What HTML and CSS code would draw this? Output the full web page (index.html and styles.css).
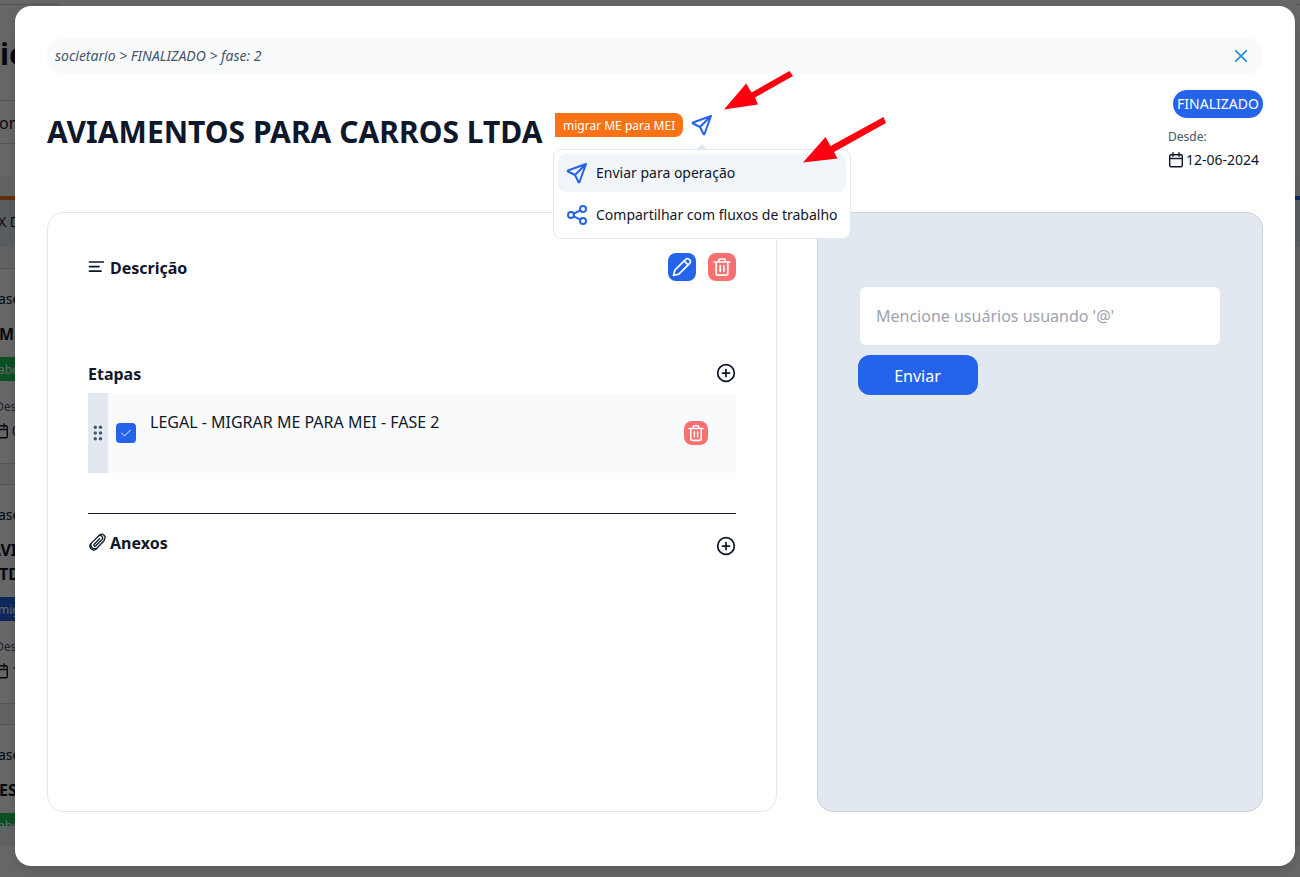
FILE: index.html
```html
<!DOCTYPE html>
<html lang="pt-BR">
<head>
<meta charset="utf-8">
<title>Fluxo de trabalho</title>
<link rel="stylesheet" href="styles.css">
</head>
<body>
<svg class="defs" aria-hidden="true">
  <symbol id="send" viewBox="0 0 24 24"><path d="M10 14 21 3M21 3l-6.500 18a.55.55 0 0 1-1 0L10 14l-7-3.500a.55.55 0 0 1 0-1L21 3"/></symbol>
  <symbol id="share" viewBox="0 0 24 24"><circle cx="6" cy="12" r="3"/><circle cx="18" cy="6" r="3"/><circle cx="18" cy="18" r="3"/><path d="m8.700 10.700 6.600-3.400M8.700 13.300l6.600 3.400"/></symbol>
  <symbol id="calendar" viewBox="0 0 16 16"><rect x="1.700" y="2.700" width="12.600" height="12" rx="1.200"/><path d="M1.700 6.500h12.600M5 .8v3.400M11 .8v3.400"/></symbol>
  <symbol id="trash" viewBox="0 0 20 20"><path d="M2.200 5h15.600M4.200 5v11.700A1.500 1.500 0 0 0 5.700 18.200h8.600a1.500 1.500 0 0 0 1.500-1.500V5M6.800 5V3.500a1.500 1.500 0 0 1 1.500-1.500h3.400a1.500 1.500 0 0 1 1.500 1.500V5M8.200 8.700v5.600M11.800 8.700v5.600"/></symbol>
  <symbol id="plus" viewBox="0 0 20 20"><circle cx="10" cy="10" r="8.300"/><path d="M10 6.500v7M6.500 10h7"/></symbol>
</svg>
<main class="screen">
  <div class="page">
    <div class="edge">
      <div class="topline"></div>
      <div class="brand"><span>ie</span></div>
      <div class="filter"><span>on</span></div>
      <div class="space"></div>
      <div class="board">
        <div class="list-head"><span>X D</span></div>
        <div class="card">
          <span class="phase">ase</span><b class="name">M</b><span class="label green">abe</span><span class="since">Des</span>
          <span class="when"><svg class="cal"><use href="#calendar"/></svg><i>0</i></span>
        </div>
        <div class="card">
          <span class="phase">ase</span><b class="name"><span class="tight">AVI</span><br>TD</b><span class="label blue">mig</span><span class="since">Des</span>
          <span class="when"><svg class="cal"><use href="#calendar"/></svg><i>1</i></span>
        </div>
        <div class="card last"><span class="phase">ase</span><b class="name">ES</b><span class="label green">abe</span></div>
      </div>
    </div>
    <div class="edge right">
      <div class="topline"></div>
      <div class="right-space"></div>
      <div class="board blue-top"><div class="list-head"></div></div>
    </div>
  </div>
  <div class="overlay"></div>
  <section class="modal">
    <nav class="crumbs"><em>societario &gt; FINALIZADO &gt; fase: 2</em>
      <svg class="close" viewBox="0 0 12 12"><path d="m.5.5 11 11m0-11-11 11"/></svg></nav>
    <header class="head">
      <h1>AVIAMENTOS PARA CARROS LTDA</h1>
      <span class="tag">migrar ME para MEI</span>
      <div class="send-wrap">
        <svg class="ico"><use href="#send"/></svg>
        <div class="menu">
          <div class="item active"><svg class="ico"><use href="#send"/></svg><span>Enviar para operação</span></div>
          <div class="item"><svg class="ico"><use href="#share"/></svg><span>Compartilhar com fluxos de trabalho</span></div>
        </div>
      </div>
      <div class="status">
        <span class="pill">FINALIZADO</span>
        <div class="date"><span class="since-label">Desde:</span>
        <span class="day"><svg class="cal"><use href="#calendar"/></svg>12-06-2024</span></div>
      </div>
    </header>
    <div class="cols">
      <section class="details">
        <div class="row desc">
          <h2><svg class="h-ico" viewBox="0 0 16 16"><path d="M1.500 3h14M1.500 7.600H11M1.500 12.200h11.500"/></svg>Descrição</h2>
          <div class="actions">
            <span class="btn edit"><svg viewBox="0 0 20 20"><path d="m1.500 18.500 1.300-5.300L13.700 2.300a2.300 2.300 0 0 1 3.400 0l.6.6a2.300 2.300 0 0 1 0 3.400L6.800 17.200zM12.200 4l3.900 3.900"/></svg></span>
            <span class="btn del"><svg><use href="#trash"/></svg></span>
          </div>
        </div>
        <div class="row steps"><h2>Etapas</h2><svg class="plus"><use href="#plus"/></svg></div>
        <div class="step">
          <div class="grip"><svg viewBox="0 0 10 16"><circle cx="2.300" cy="2.300" r="1.700"/><circle cx="7.500" cy="2.300" r="1.700"/><circle cx="2.300" cy="8" r="1.700"/><circle cx="7.500" cy="8" r="1.700"/><circle cx="2.300" cy="13.800" r="1.700"/><circle cx="7.500" cy="13.800" r="1.700"/></svg></div>
          <span class="check"><svg viewBox="0 0 10 8"><path d="m.5 4 3 3L9.500 1"/></svg></span>
          <span class="step-name">LEGAL - MIGRAR ME PARA MEI - FASE 2</span>
          <span class="btn del small"><svg><use href="#trash"/></svg></span>
        </div>
        <div class="row files"><h2><svg class="clip" viewBox="0 0 18 18"><path d="m11.700 5.700-5.500 5.500a1.100 1.100 0 0 0 1.600 1.600l6.300-6.300a2.500 2.500 0 0 0-3.500-3.500L4.100 9.400a3.700 3.700 0 0 0 5.200 5.300l7-7.200M10.600 3l1-1a3.300 3.300 0 0 1 4.600 4.700M4.100 9.400l-1.500 1.500a3.900 3.900 0 0 0 5.400 5.400l1.500-1.600"/></svg>Anexos</h2><svg class="plus"><use href="#plus"/></svg></div>
      </section>
      <aside class="comments">
        <div class="field">Mencione usuários usuando '@'</div>
        <button class="submit">Enviar</button>
      </aside>
    </div>
  </section>
  <svg class="pointers" viewBox="0 0 164 96"><path d="M1 38.500 23.200 12.500 28.500 21.500 66.500 0 70 5 32 26.500 35 33.500zM80 91.500 102.500 66 107.500 75 160.500 46 163 52 111 81 114.500 87.500z"/></svg>
</main>
</body>
</html>
```
FILE: styles.css
```css
* { box-sizing: border-box; margin: 0; }
body { font-family: "Noto Sans", sans-serif; font-size: 16px; line-height: 24px; color: #0f172a; overflow: hidden; }
svg { display: block; fill: none; stroke: currentColor; stroke-linecap: round; stroke-linejoin: round; flex: none; }
.defs { position: absolute; width: 0; height: 0; }
.screen { position: relative; width: 1300px; height: 877px; overflow: hidden; }

/* board behind the dialog */
.page { display: flex; justify-content: space-between; height: 877px; background: #fff; }
.edge { width: 60px; white-space: nowrap; }
.edge.right { width: 5px; }
.topline { height: 5px; border-bottom: 1px solid #cbd5e1; }
.brand { height: 95px; padding-top: 31px; font-size: 30px; line-height: 36px; font-weight: 700; }
.filter { height: 44px; border: solid #cbd5e1; border-width: 1px 0; padding-top: 11px; line-height: 22px; font-size: 16px; }
.filter span { margin-left: -1px; }
.space { height: 32px; }
.right-space { height: 171px; }
.board { height: 670px; padding-top: 20px; background: #f1f5f9; }
.list-head { height: 51px; margin-bottom: 21px; border-top: 4px solid #f97316; background: #e2e8f0; padding-top: 10px; font-size: 14px; line-height: 24px; }
.list-head span { margin-left: -2px; }
.blue-top .list-head { border-color: #2563eb; }
.card { display: flex; flex-direction: column; align-items: flex-start; margin-bottom: 20px; padding: 20px 0 22px; background: #fff; border: solid #cbd5e1; border-width: 1px 0; }
.card.last { height: 102px; padding-bottom: 0; overflow: hidden; margin: 0; border-bottom: 0; }
.phase { font-size: 14px; line-height: 20px; margin-left: -2px; }
.name { font-size: 16px; margin: 13px 0 11px -1px; }
.tight { margin-left: -9px; }
.label { width: 60px; height: 24px; flex: none; font-size: 12px; line-height: 25px; color: #fff; text-indent: -2px; }
.green { background: #22c55e; }
.blue { background: #2563eb; }
.since { font-size: 12px; line-height: 20px; margin: 16px 0 4px -5px; color: #475569; }
.when { display: flex; align-items: center; height: 20px; margin-left: -7px; gap: 3px; font-size: 14px; }
.when i { font-style: normal; }
.cal { width: 16px; height: 16px; stroke-width: 1.400; }
.overlay { position: absolute; inset: 0; background: rgba(0,0,0,.6); }

/* dialog */
.modal { position: absolute; left: 15px; top: 6px; width: 1280px; height: 860px; padding: 32px; border-radius: 16px; background: #fff; box-shadow: 0 4px 8px rgba(0,0,0,.12); }
.crumbs { display: flex; align-items: center; justify-content: space-between; height: 36px; padding: 0 16px 0 8px; border-radius: 16px; background: #f8fafc; color: #475569; font-size: 14px; }
.close { width: 12px; height: 12px; color: #228be6; stroke-width: 1.600; }
.head { display: flex; height: 138px; padding-top: 16px; }
h1 { font-size: 30px; line-height: 36px; font-weight: 700; margin-top: 24px; white-space: nowrap; width: 508px; letter-spacing: .02px; }
.tag { height: 24px; margin-top: 23px; padding: 0 8px; width: 128px; background: #f97316; color: #fff; font-size: 12px; line-height: 26px; border-radius: 0 8px 8px 0; white-space: nowrap; }
.ico { width: 24px; height: 24px; color: #2563eb; stroke-width: 2; }
.send-wrap { position: relative; margin: 23px 0 0 7px; height: 24px; }
.menu { position: absolute; left: -137px; top: 36px; width: 298px; height: 90px; padding: 4px; border: 1px solid #e2e8f0; border-radius: 8px; background: #fff; font-size: 14px; }
.menu::before { content: ""; position: absolute; left: 143px; top: -6px; border: solid transparent; border-width: 0 5px 5px; border-bottom-color: #e2e8f0; }
.item { display: flex; align-items: center; gap: 7px; height: 38px; margin-bottom: 4px; padding-left: 7px; border-radius: 8px; white-space: nowrap; }
.active { background: #f1f5f9; }
.status { margin-left: auto; display: flex; flex-direction: column; align-items: flex-end; }
.pill { width: 90px; height: 28px; line-height: 28px; text-align: center; border-radius: 14px; background: #2563eb; color: #fff; font-size: 14px; }
.date { width: 95px; padding-top: 9px; }
.since-label { display: block; font-size: 12px; line-height: 20px; color: #475569; }
.day { display: flex; align-items: center; gap: 2px; margin-top: 1px; font-size: 14px; line-height: 24px; }
.cols { display: grid; grid-template-columns: 730px 446px; gap: 40px; height: 600px; }
.details { border: 1px solid #e2e8f0; border-radius: 16px; padding: 40px; }
.row { display: flex; justify-content: space-between; align-items: flex-start; }
h2 { display: flex; align-items: center; font-size: 16px; line-height: 24px; font-weight: 700; }
.desc { height: 109px; }
.desc h2 { height: 30px; }
.h-ico { width: 16px; height: 16px; margin: -2px 6px 0 0; stroke-width: 1.700; }
.actions { display: flex; gap: 12px; }
.btn { display: grid; place-items: center; width: 28px; height: 28px; border-radius: 8px; color: #fff; }
.btn svg { width: 20px; height: 20px; stroke-width: 1.700; }
.edit { background: #2563eb; }
.del { background: #f87171; }
.btn.small { width: 24px; height: 24px; margin: 0 28px 0 auto; }
.btn.small svg { width: 18px; height: 18px; }
.steps { height: 31px; }
.steps .plus { margin-top: 1px; }
.plus { width: 20px; height: 20px; stroke-width: 1.750; }
.step { display: flex; align-items: center; height: 80px; background: #f8fafc; }
.grip { display: grid; place-items: center; align-self: stretch; width: 20px; margin-right: 8px; background: #e2e8f0; }
.grip svg { width: 10px; height: 16px; fill: #475569; stroke: none; }
.check { display: grid; place-items: center; width: 20px; height: 20px; margin-right: 14px; border-radius: 4px; background: #2563eb; color: #fff; }
.check svg { width: 10px; height: 8px; stroke-width: .9; }
.step-name { align-self: flex-start; margin-top: 17px; }
.files { margin-top: 40px; padding-top: 17px; border-top: 1px solid #0f172a; }
.files .plus { margin-top: 5px; }
.clip { width: 18px; height: 18px; margin: -2px 4px 0 0; stroke-width: 1.300; }
.comments { padding: 74px 40px; border: 1px solid #cbd5e1; border-radius: 16px; background: #e2e8f0; }
.field { height: 58px; width: 360px; margin-left: 2px; padding: 17px 16px; border-radius: 6px; background: #fff; color: #9ca3af; }
.submit { display: block; width: 120px; height: 40px; margin-top: 10px; padding: 2px 1px 0 0; border: 0; border-radius: 12px; background: #2563eb; color: #fff; font: 16px "Noto Sans", sans-serif; }

/* red arrows drawn over the menu */
.pointers { position: absolute; left: 723px; top: 71px; width: 164px; height: 96px; fill: #ff0010; stroke: none; }
```
